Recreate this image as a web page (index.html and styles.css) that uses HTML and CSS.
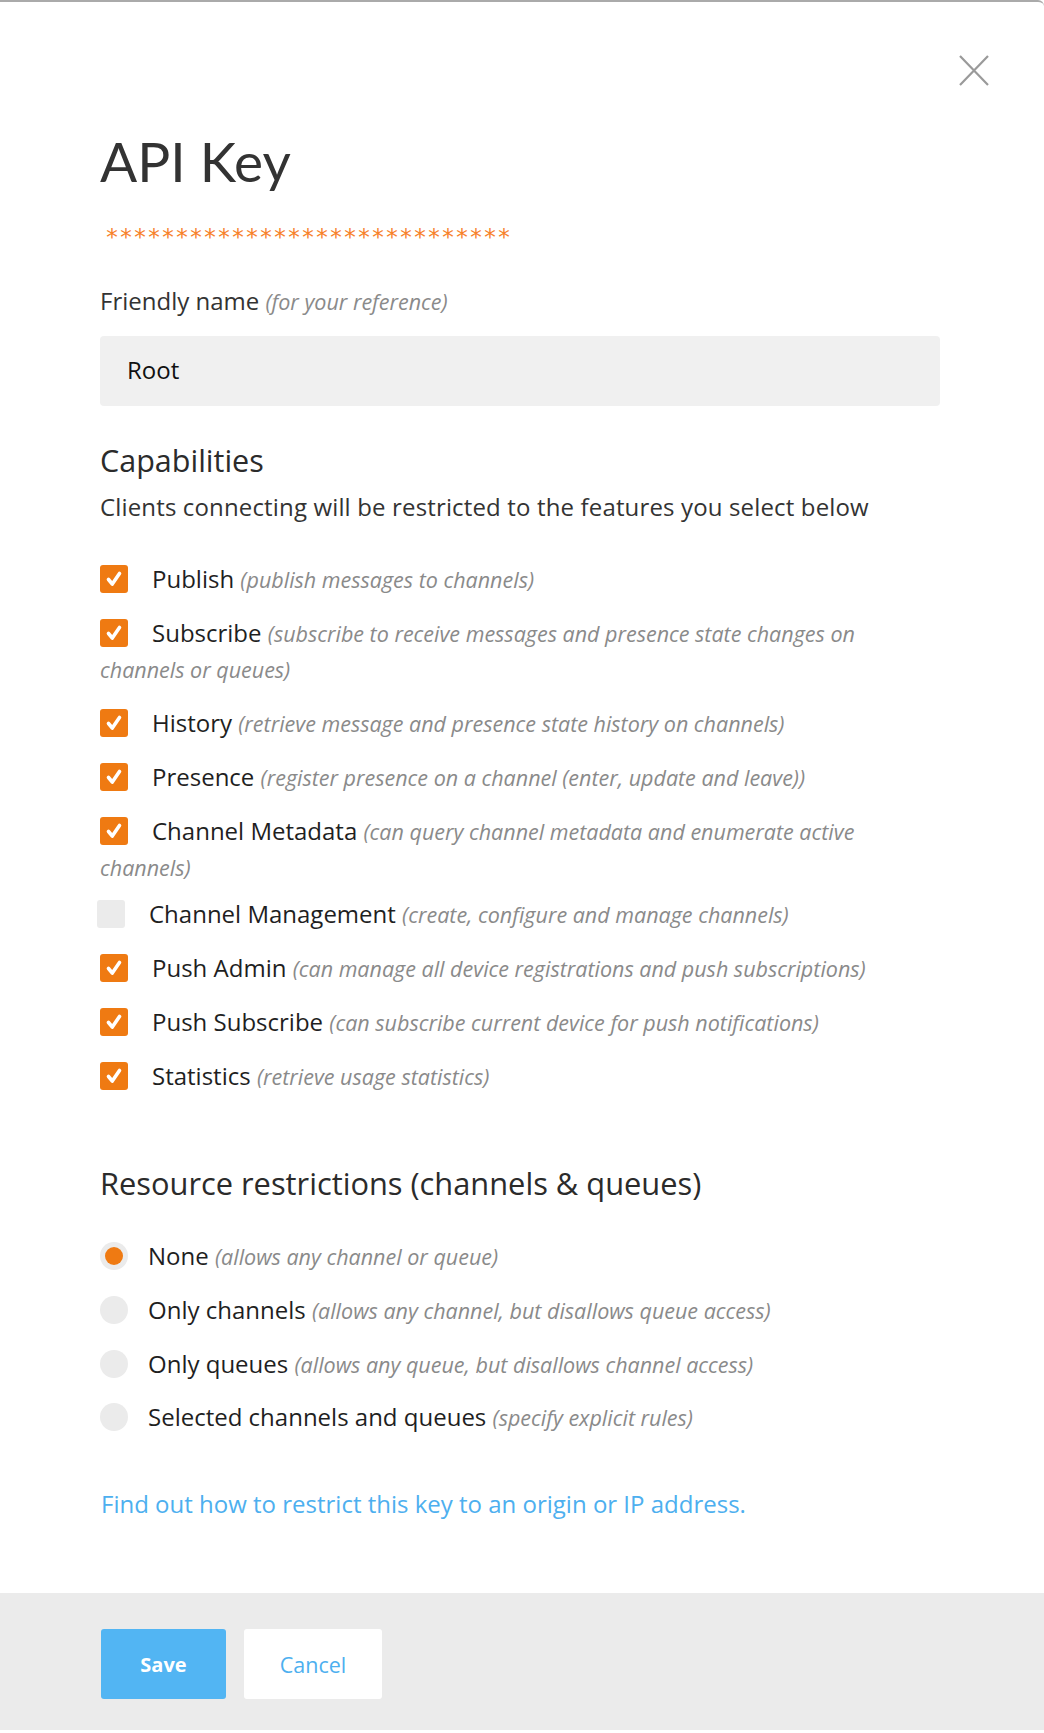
FILE: index.html
```html
<!DOCTYPE html>
<html lang="en">
<head>
<meta charset="utf-8">
<title>API Key</title>
<link rel="stylesheet" href="styles.css">
</head>
<body>
<div class="modal">
  <button class="close" aria-label="Close">
    <svg width="30" height="31" viewBox="0 0 30 31"><path d="M1 1 L29 30 M29 1 L1 30" stroke="#9a9a9a" stroke-width="2.2" fill="none"/></svg>
  </button>
  <div class="content">
    <h1 class="title">API Key</h1>
    <div class="secret">*****************************</div>

    <div class="field-label">Friendly name <span class="note">(for your reference)</span></div>
    <div class="input">Root</div>

    <h2 class="section-title">Capabilities</h2>
    <p class="section-desc">Clients connecting will be restricted to the features you select below</p>

    <div class="options">
      <div class="opt"><span class="cb on"><svg viewBox="0 0 28 28"><path d="M8.5 14.5 L12.3 19 L19.5 8.5" stroke="#fff" stroke-width="3.6" fill="none" stroke-linecap="round" stroke-linejoin="round"/></svg></span><span class="lbl">Publish</span> <span class="note">(publish messages to channels)</span></div>
      <div class="opt"><span class="cb on"><svg viewBox="0 0 28 28"><path d="M8.5 14.5 L12.3 19 L19.5 8.5" stroke="#fff" stroke-width="3.6" fill="none" stroke-linecap="round" stroke-linejoin="round"/></svg></span><span class="lbl">Subscribe</span> <span class="note">(subscribe to receive messages and presence state changes on channels or queues)</span></div>
      <div class="opt"><span class="cb on"><svg viewBox="0 0 28 28"><path d="M8.5 14.5 L12.3 19 L19.5 8.5" stroke="#fff" stroke-width="3.6" fill="none" stroke-linecap="round" stroke-linejoin="round"/></svg></span><span class="lbl">History</span> <span class="note">(retrieve message and presence state history on channels)</span></div>
      <div class="opt"><span class="cb on"><svg viewBox="0 0 28 28"><path d="M8.5 14.5 L12.3 19 L19.5 8.5" stroke="#fff" stroke-width="3.6" fill="none" stroke-linecap="round" stroke-linejoin="round"/></svg></span><span class="lbl">Presence</span> <span class="note">(register presence on a channel (enter, update and leave))</span></div>
      <div class="opt"><span class="cb on"><svg viewBox="0 0 28 28"><path d="M8.5 14.5 L12.3 19 L19.5 8.5" stroke="#fff" stroke-width="3.6" fill="none" stroke-linecap="round" stroke-linejoin="round"/></svg></span><span class="lbl">Channel Metadata</span> <span class="note">(can query channel metadata and enumerate active channels)</span></div>
      <div class="opt opt-tight"><span class="cb off"></span><span class="lbl">Channel Management</span> <span class="note">(create, configure and manage channels)</span></div>
      <div class="opt"><span class="cb on"><svg viewBox="0 0 28 28"><path d="M8.5 14.5 L12.3 19 L19.5 8.5" stroke="#fff" stroke-width="3.6" fill="none" stroke-linecap="round" stroke-linejoin="round"/></svg></span><span class="lbl">Push Admin</span> <span class="note">(can manage all device registrations and push subscriptions)</span></div>
      <div class="opt"><span class="cb on"><svg viewBox="0 0 28 28"><path d="M8.5 14.5 L12.3 19 L19.5 8.5" stroke="#fff" stroke-width="3.6" fill="none" stroke-linecap="round" stroke-linejoin="round"/></svg></span><span class="lbl">Push Subscribe</span> <span class="note">(can subscribe current device for push notifications)</span></div>
      <div class="opt"><span class="cb on"><svg viewBox="0 0 28 28"><path d="M8.5 14.5 L12.3 19 L19.5 8.5" stroke="#fff" stroke-width="3.6" fill="none" stroke-linecap="round" stroke-linejoin="round"/></svg></span><span class="lbl">Statistics</span> <span class="note">(retrieve usage statistics)</span></div>
    </div>

    <h2 class="section-title resource">Resource restrictions (channels &amp; queues)</h2>

    <div class="radios">
      <div class="opt"><span class="rb on"></span><span class="lbl">None</span> <span class="note">(allows any channel or queue)</span></div>
      <div class="opt"><span class="rb"></span><span class="lbl">Only channels</span> <span class="note">(allows any channel, but disallows queue access)</span></div>
      <div class="opt"><span class="rb"></span><span class="lbl">Only queues</span> <span class="note">(allows any queue, but disallows channel access)</span></div>
      <div class="opt"><span class="rb"></span><span class="lbl">Selected channels and queues</span> <span class="note">(specify explicit rules)</span></div>
    </div>

    <a class="link" href="#">Find out how to restrict this key to an origin or IP address.</a>
  </div>
  <div class="footer">
    <button class="btn save">Save</button>
    <button class="btn cancel">Cancel</button>
  </div>
</div>
</body>
</html>
```
FILE: styles.css
```css
* { box-sizing: border-box; }
html, body { margin: 0; padding: 0; background: #fff; }
body { font-family: "Open Sans", "Lato", sans-serif; color: #222; }

.modal {
  position: relative;
  width: 1044px;
  border-top: 2px solid #aaa;
  border-top-right-radius: 6px;
  background: #fff;
}

.close {
  position: absolute;
  top: 53px;
  left: 959px;
  width: 30px;
  height: 31px;
  padding: 0;
  border: 0;
  background: none;
  cursor: pointer;
}
.close svg { display: block; }

.content {
  padding: 126px 104px 71px 100px;
}

.title {
  margin: 0;
  font-family: "Lato", "Open Sans", sans-serif;
  font-size: 55px;
  line-height: 66px;
  font-weight: 400;
  color: #333;
}

.secret {
  margin-top: 33px;
  margin-left: 5px;
  font-family: "DejaVu Sans Mono", monospace;
  font-size: 23.25px;
  line-height: 20px;
  height: 20px;
  color: #f7812b;
}

.field-label {
  margin-top: 36px;
  font-size: 24px;
  line-height: 36px;
  color: #333;
}

.note {
  font-style: italic;
  font-size: 21.5px;
  line-height: 26px;
  color: #8a8a8a;
}

.input {
  margin-top: 17px;
  height: 70px;
  background: #f0f0f0;
  border-radius: 4px;
  padding-left: 27px;
  font-size: 24px;
  line-height: 68px;
  color: #111;
}

.section-title {
  margin: 36px 0 0;
  font-size: 30.5px;
  line-height: 36px;
  font-weight: 400;
  color: #2b2b2b;
}

.section-desc {
  margin: 11px 0 0;
  font-size: 24px;
  line-height: 36px;
  letter-spacing: 0.15px;
  color: #333;
}

.options {
  margin-top: 36px;
  display: flex;
  flex-direction: column;
  gap: 18px;
}

.opt {
  font-size: 24px;
  line-height: 36px;
  color: #1f1f1f;
}
.opt-tight { margin-top: -7px; }

.cb {
  display: inline-block;
  width: 28px;
  height: 28px;
  border-radius: 3px;
  vertical-align: top;
  margin-top: 4px;
  margin-right: 24px;
}
.cb svg { display: block; width: 28px; height: 28px; }
.cb.on { background: #ef7a12; }
.cb.off { background: #ebebeb; margin-left: -3px; }

.resource {
  margin-top: 69px;
  font-size: 30.8px;
  line-height: 40px;
}

.radios {
  margin-top: 35px;
  display: flex;
  flex-direction: column;
  gap: 17.8px;
}

.rb {
  display: inline-block;
  width: 28px;
  height: 28px;
  border-radius: 50%;
  background: #ebebeb;
  vertical-align: top;
  margin-top: 4px;
  margin-right: 20px;
  position: relative;
}
.rb.on::after {
  content: "";
  position: absolute;
  left: 5px;
  top: 5px;
  width: 18px;
  height: 18px;
  border-radius: 50%;
  background: #ef7a12;
}

.link {
  display: block;
  margin-top: 51px;
  margin-left: 1px;
  font-size: 24px;
  line-height: 36px;
  color: #4dafef;
  text-decoration: none;
}

.footer {
  background: #ebebeb;
  padding: 36px 0 31px 101px;
  display: flex;
  gap: 18px;
}

.btn {
  height: 70px;
  border: 0;
  border-radius: 3px;
  font-family: "Open Sans", "Lato", sans-serif;
  cursor: pointer;
}
.save {
  width: 125px;
  background: #52b5f3;
  color: #fff;
  font-size: 20px;
  font-weight: 700;
}
.cancel {
  width: 138px;
  background: #fff;
  color: #4dafef;
  font-size: 21.5px;
}
```
